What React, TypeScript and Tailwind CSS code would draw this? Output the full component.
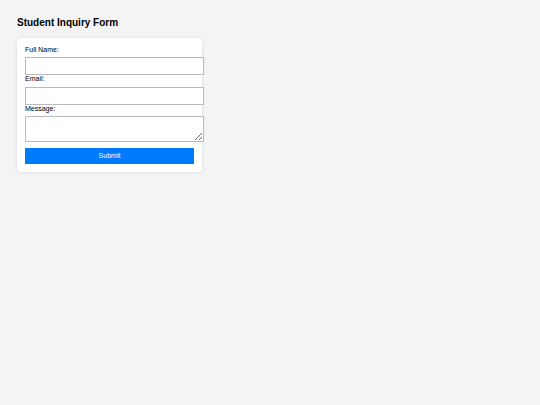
export default function App() {
  return (
    <div className="min-h-[405px] bg-[#f4f4f4] px-[17px] pt-[17px] font-['Liberation_Sans',Arial,sans-serif] text-black">
      <h2 className="text-[10px] font-bold leading-[12px] mb-[9px]">Student Inquiry Form</h2>
      <form className="w-[185px] bg-white rounded-[4px] shadow-[0_0_4px_rgba(0,0,0,0.1)] p-[8px]">
        <label className="block text-[7px] leading-[8px] mb-[3px]">Full Name:</label>
        <input
          type="text"
          className="box-content block w-[169px] h-[8px] px-[4px] py-[4px] border border-[#bbb] bg-white outline-none"
        />
        <label className="block text-[7px] leading-[8px] mb-[4px]">Email:</label>
        <input
          type="email"
          className="box-content block w-[169px] h-[8px] px-[4px] py-[4px] border border-[#bbb] bg-white outline-none"
        />
        <label className="block text-[7px] leading-[8px] mb-[3px]">Message:</label>
        <textarea
          className="box-content block w-[169px] h-[16px] px-[4px] py-[4px] border border-[#bbb] bg-white outline-none text-[7px]"
        />
        <button
          type="button"
          className="block w-[169px] h-[16px] mt-[6px] bg-[#007bff] text-white text-[7px] leading-[16px] text-center"
        >
          Submit
        </button>
      </form>
    </div>
  );
}
